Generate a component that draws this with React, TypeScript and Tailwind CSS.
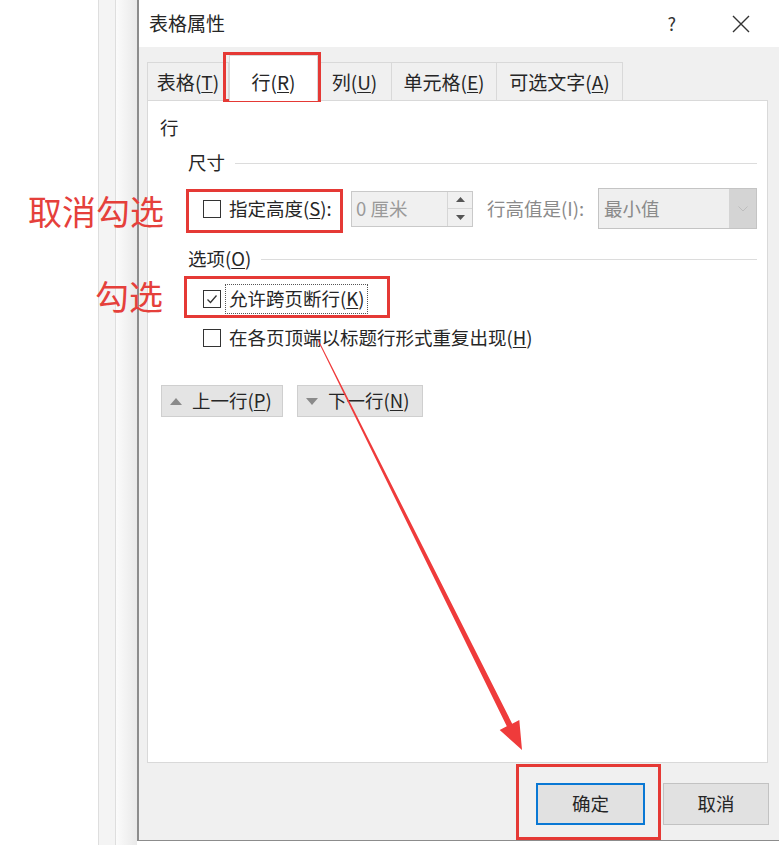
import React from "react";

const font = { fontFamily: '"Noto Sans CJK SC", "Noto Sans", sans-serif' };

function Mn({ children }: { children: React.ReactNode }) {
  return <span className="underline underline-offset-2">{children}</span>;
}

function Checkbox({ checked = false }: { checked?: boolean }) {
  return (
    <span className="flex h-[18px] w-[18px] shrink-0 items-center justify-center border border-[#333] bg-white">
      {checked && (
        <svg width="14" height="14" viewBox="0 0 14 14">
          <path d="M2.5 7.5 L5.5 10.5 L11.5 3.5" fill="none" stroke="#333" strokeWidth="1.3" />
        </svg>
      )}
    </span>
  );
}

function GroupTitle({ children }: { children: React.ReactNode }) {
  return (
    <div className="ml-[40px] mr-[10px] flex h-[24px] items-center gap-[10px]">
      <span className="whitespace-nowrap text-[#262626]">{children}</span>
      <span className="h-px flex-1 bg-[#dcdcdc]" />
    </div>
  );
}

const tabs = [
  { label: "表格", key: "T", w: "w-[82px]" },
  { label: "行", key: "R", w: "w-[89px]", active: true },
  { label: "列", key: "U", w: "w-[74px]" },
  { label: "单元格", key: "E", w: "w-[105px]" },
  { label: "可选文字", key: "A", w: "w-[126px]" },
];

export default function App() {
  return (
    <div className="relative flex h-[845px] w-[779px] overflow-hidden bg-white text-[18.5px] text-[#262626]" style={font}>
      {/* background document edge */}
      <div className="w-[98px] shrink-0" />
      <div className="w-[18px] shrink-0 border-x border-[#dedede] bg-[#f4f4f4]" />
      <div className="w-[21px] shrink-0 bg-gradient-to-r from-[#fbfbfb] to-[#e9e9e9]" />

      {/* dialog */}
      <div className="flex h-[841px] flex-1 flex-col border-b border-l-2 border-[#8c8c8c] bg-[#f0f0f0]">
        <div className="flex h-[47px] shrink-0 items-center bg-white pl-[10px] pr-[28px]">
          <span className="text-[19px]">表格属性</span>
          <span className="ml-auto text-[18px] text-[#333]">?</span>
          <svg className="ml-[55px]" width="20" height="20" viewBox="0 0 20 20">
            <path d="M2 2 L18 18 M18 2 L2 18" stroke="#333" strokeWidth="1.4" />
          </svg>
        </div>

        <div className="flex h-[53px] shrink-0 items-end pl-[8px] text-[19px]">
          {tabs.map((t) =>
            t.active ? (
              <div
                key={t.key}
                className={`${t.w} relative z-10 -mb-px flex h-[46px] items-center justify-center whitespace-nowrap border-x border-t border-[#d9d9d9] bg-white pt-[8px]`}
              >
                {t.label}(<Mn>{t.key}</Mn>)
              </div>
            ) : (
              <div
                key={t.key}
                className={`${t.w} flex h-[38px] items-center justify-center whitespace-nowrap border-t border-r border-[#d9d9d9] pt-[1px] first:border-l`}
              >
                {t.label}(<Mn>{t.key}</Mn>)
              </div>
            )
          )}
        </div>

        <div className="ml-[8px] h-[663px] w-[621px] shrink-0 border border-[#d9d9d9] bg-white">
          <div className="ml-[12px] mt-[15px] flex h-[24px] items-center">行</div>

          <div className="mt-[11px]">
            <GroupTitle>尺寸</GroupTitle>
          </div>

          <div className="ml-[55px] mt-[13px] flex h-[41px] items-center">
            <Checkbox />
            <span className="ml-[8px] w-[122px] shrink-0 whitespace-nowrap">
              指定高度(<Mn>S</Mn>):
            </span>
            <div className="flex h-[36px] w-[122px] shrink-0 border border-[#c9c9c9] bg-[#f0f0f0]">
              <span className="flex flex-1 items-center pl-[4px] text-[#9a9a9a]">0 厘米</span>
              <div className="flex w-[25px] flex-col border-l border-[#d6d6d6]">
                <span className="flex flex-1 items-center justify-center border-b border-[#d6d6d6]">
                  <svg width="9" height="5" viewBox="0 0 9 5">
                    <path d="M0 5 L4.5 0 L9 5 Z" fill="#555" />
                  </svg>
                </span>
                <span className="flex flex-1 items-center justify-center">
                  <svg width="9" height="5" viewBox="0 0 9 5">
                    <path d="M0 0 L4.5 5 L9 0 Z" fill="#555" />
                  </svg>
                </span>
              </div>
            </div>
            <span className="ml-[14px] w-[111px] shrink-0 whitespace-nowrap text-[#8a8a8a]">行高值是(I):</span>
            <div className="flex h-[41px] w-[159px] shrink-0 border border-[#c4c4c4] bg-[#efefef]">
              <span className="flex flex-1 items-center pl-[5px] text-[#8a8a8a]">最小值</span>
              <span className="flex w-[27px] items-center justify-center bg-[#d4d4d4]">
                <svg width="10" height="6" viewBox="0 0 10 6">
                  <path d="M0.5 0.5 L5 5 L9.5 0.5" fill="none" stroke="#bdbdbd" strokeWidth="1" />
                </svg>
              </span>
            </div>
          </div>

          <div className="mt-[18px]">
            <GroupTitle>
              选项(<Mn>O</Mn>)
            </GroupTitle>
          </div>

          <div className="ml-[55px] mt-[13px] flex h-[30px] items-center">
            <Checkbox checked />
            <span className="ml-[4px] flex h-[30px] items-center whitespace-nowrap border border-dotted border-[#555] px-[3px]">
              <span>
                允许跨页断行(<Mn>K</Mn>)
              </span>
            </span>
          </div>

          <div className="ml-[55px] mt-[9px] flex h-[30px] items-center">
            <Checkbox />
            <span className="ml-[8px] whitespace-nowrap">
              在各页顶端以标题行形式重复出现(<Mn>H</Mn>)
            </span>
          </div>

          <div className="ml-[13px] mt-[32px] flex gap-[14px]">
            <button className="flex h-[32px] w-[122px] items-center gap-[10px] border border-[#cfcfcf] bg-[#e4e4e4] pl-[8px]">
              <svg width="12" height="7" viewBox="0 0 12 7">
                <path d="M0 7 L6 0 L12 7 Z" fill="#8a8a8a" />
              </svg>
              <span className="whitespace-nowrap">
                上一行(<Mn>P</Mn>)
              </span>
            </button>
            <button className="flex h-[32px] w-[126px] items-center gap-[10px] border border-[#cfcfcf] bg-[#e4e4e4] pl-[8px]">
              <svg width="12" height="7" viewBox="0 0 12 7">
                <path d="M0 0 L6 7 L12 0 Z" fill="#8a8a8a" />
              </svg>
              <span className="whitespace-nowrap">
                下一行(<Mn>N</Mn>)
              </span>
            </button>
          </div>
        </div>

        <div className="flex flex-1 items-start justify-end gap-[18px] pr-[10px] pt-[20px]">
          <button className="h-[42px] w-[109px] border-2 border-[#0a78d4] bg-[#e1e1e1]">确定</button>
          <button className="h-[42px] w-[106px] border border-[#c2c2c2] bg-[#e1e1e1]">取消</button>
        </div>
      </div>

      {/* annotations */}
      <div className="pointer-events-none absolute left-[223px] top-[52px] h-[50px] w-[98px] border-[3px] border-[#e53935]" />
      <div className="pointer-events-none absolute left-[186px] top-[189px] h-[44px] w-[157px] border-[3px] border-[#e53935]" />
      <div className="pointer-events-none absolute left-[184px] top-[276px] h-[42px] w-[206px] border-[3px] border-[#e53935]" />
      <div className="pointer-events-none absolute left-[516px] top-[764px] h-[76px] w-[145px] border-[3px] border-[#e53935]" />
      <div className="pointer-events-none absolute left-[28px] top-[188px] text-[34px] leading-[46px] text-[#e5403b]">取消勾选</div>
      <div className="pointer-events-none absolute left-[95px] top-[273px] text-[34px] leading-[46px] text-[#e5403b]">勾选</div>
      <svg className="pointer-events-none absolute left-0 top-0" width="779" height="845" viewBox="0 0 779 845">
        <polygon
          points="318.4,339.8 512.2,723.7 519.3,720.1 522,750 499.7,729.9 506.8,726.3 317.6,340.2"
          fill="#ef3b3b"
        />
      </svg>
    </div>
  );
}
